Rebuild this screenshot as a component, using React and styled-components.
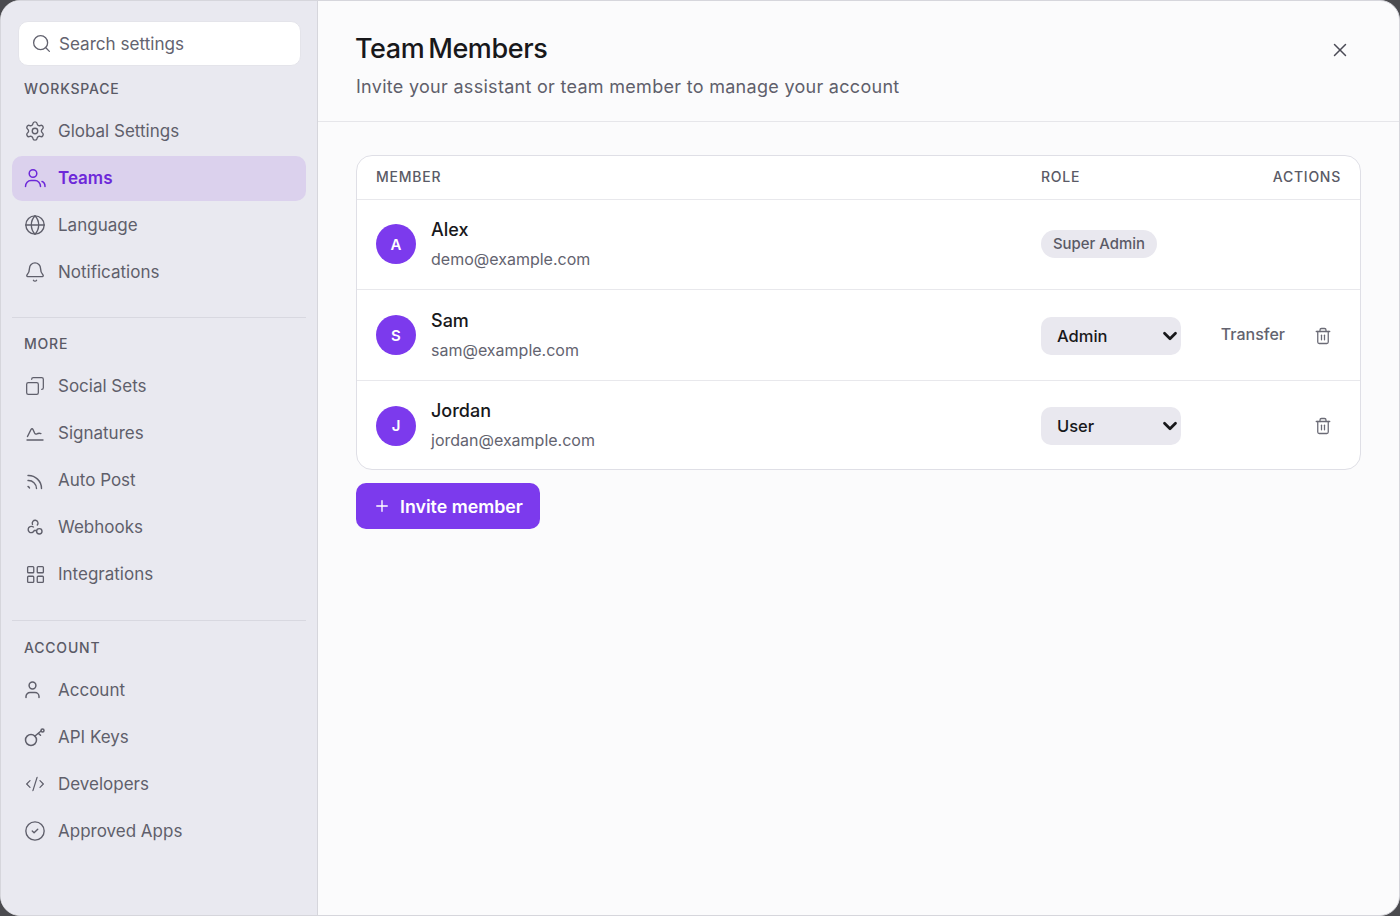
import styled, { createGlobalStyle } from 'styled-components';
import {
  Search, Settings, Globe, Bell, Copy, LayoutGrid, CodeXml, CircleCheck, Trash2, X, Plus, ChevronDown,
} from 'lucide-react';

const GlobalStyle = createGlobalStyle`
  * { box-sizing: border-box; }
  html, body { margin: 0; height: 100%; background: #4b4b4f; }
  body { font-family: Inter, "Liberation Sans", sans-serif; }
`;

const Window = styled.div`
  display: flex;
  height: 916px;
  overflow: hidden;
  border: 1px solid #d6d6dc;
  border-radius: 20px;
  background: #fbfbfc;
`;

const Sidebar = styled.aside`
  width: 317px;
  flex-shrink: 0;
  padding: 20px 11px 0;
  background: #e9e9f0;
  border-right: 1px solid #d6d6dc;
  display: flex;
  flex-direction: column;
`;

const SearchBox = styled.div`
  display: flex;
  align-items: center;
  gap: 7px;
  height: 45px;
  margin: 0 5px 0 6px;
  padding: 0 12px;
  background: #fff;
  border: 1px solid #e4e4ea;
  border-radius: 10px;
  color: #63636f;
  font-size: 17.1px;
`;

const SectionLabel = styled.div`
  height: 20px;
  line-height: 20px;
  margin: ${(p) => p.$top}px 0 10px 12px;
  color: #5a5a66;
  font-size: 14px;
  font-weight: 500;
  letter-spacing: 0.8px;
`;

const NavItem = styled.div`
  display: flex;
  align-items: center;
  gap: 12px;
  height: 45px;
  margin-bottom: 2px;
  padding: 0 0 1px 12px;
  border-radius: 10px;
  background: ${(p) => (p.$active ? '#dbd1ed' : 'transparent')};
  color: ${(p) => (p.$active ? '#6d28d9' : '#5f5f6b')};
  font-size: 17px;
  font-weight: ${(p) => (p.$active ? 600 : 400)};
`;

const IconSlot = styled.span`
  display: flex;
  justify-content: center;
  flex: 0 0 22px;
`;

const Divider = styled.hr`
  width: 100%;
  margin: ${(p) => p.$top}px 0 0;
  border: 0;
  border-top: 1px solid #d8d8e0;
`;

const Main = styled.main`
  flex: 1;
  min-width: 0;
  display: flex;
  flex-direction: column;
`;

const Header = styled.header`
  display: flex;
  justify-content: space-between;
  height: 121px;
  padding: 28px 48px 0 38px;
  border-bottom: 1px solid #e6e6ea;
`;

const Title = styled.h1`
  margin: 0 0 0 -1px;
  color: #18181b;
  font-size: 27px;
  line-height: 40px;
  font-weight: 500;
  letter-spacing: -0.4px;
  word-spacing: -3px;
`;

const Subtitle = styled.p`
  margin: 4px 0 0;
  color: #5f5f6b;
  font-size: 18px;
  line-height: 28px;
  letter-spacing: 0.29px;
`;

const CloseButton = styled.button`
  display: flex;
  align-self: flex-start;
  margin-top: 10px;
  padding: 0;
  background: none;
  border: 0;
  color: #4a4a55;
`;

const Content = styled.div`
  padding: 33px 38px 0 38px;
`;

const Table = styled.div`
  background: #fff;
  border: 1px solid #dfdfe6;
  border-radius: 16px;
`;

const Row = styled.div`
  display: grid;
  grid-template-columns: 1fr 160px 140px;
  align-items: center;
  height: ${(p) => p.$height}px;
  padding: ${(p) => p.$padTop || 0}px 19px ${(p) => p.$padBottom || 0}px;
  border-bottom: ${(p) => (p.$last ? '0' : '1px solid #e8e8ec')};
`;

const HeadCell = styled.div`
  color: #5a5a66;
  font-size: 14px;
  font-weight: 500;
  letter-spacing: 0.75px;
  text-align: ${(p) => (p.$right ? 'right' : 'left')};
`;

const Member = styled.div`
  display: flex;
  align-items: center;
  gap: 15px;
`;

const Avatar = styled.div`
  display: flex;
  align-items: center;
  justify-content: center;
  width: 40px;
  height: 40px;
  border-radius: 50%;
  background: #7c3aed;
  color: #fff;
  font-size: 15px;
  font-weight: 600;
`;

const Name = styled.div`
  color: #18181b;
  font-size: 18px;
  line-height: 24px;
  font-weight: 500;
`;

const Email = styled.div`
  margin-top: 5px;
  color: #63636f;
  font-size: 16px;
  line-height: 24px;
`;

const Badge = styled.span`
  display: inline-block;
  padding: 0 12px;
  height: 28px;
  line-height: 28px;
  border-radius: 14px;
  background: #e9e8ef;
  color: #5a5a66;
  font-size: 14.9px;
  font-weight: 500;
`;

const SelectWrap = styled.div`
  position: relative;
  width: 140px;
  margin-top: 1px;
  color: #18181b;

  svg {
    position: absolute;
    top: 8px;
    right: 0;
    pointer-events: none;
  }
`;

const RoleSelect = styled.select`
  display: block;
  width: 100%;
  height: 38px;
  padding: 0 16px;
  appearance: none;
  border: 0;
  border-radius: 10px;
  background: #e9e8ef;
  color: #18181b;
  font-family: inherit;
  font-size: 16.5px;
  font-weight: 500;
`;

const Actions = styled.div`
  display: flex;
  align-items: center;
  justify-content: flex-end;
  gap: 20px;
`;

const Transfer = styled.button`
  padding: 0 0 2px;
  background: none;
  border: 0;
  color: #63636f;
  font-family: inherit;
  font-size: 16px;
  font-weight: 500;
`;

const TrashButton = styled.button`
  display: flex;
  padding: 10px 9px 9px;
  background: none;
  border: 0;
  color: #6b6b76;
`;

const InviteButton = styled.button`
  display: flex;
  align-items: center;
  gap: 9px;
  height: 46px;
  margin-top: 13px;
  padding: 0 17px;
  border: 0;
  border-radius: 10px;
  background: #7c3aed;
  color: #fff;
  font-family: inherit;
  font-size: 17.8px;
  font-weight: 600;
`;

const FlippedCopy = styled(Copy)`
  transform: scaleX(-1);
`;

const TeamsIcon = () => (
  <svg width="22" height="22" viewBox="0 0 22 22" fill="none" stroke="currentColor" strokeWidth="1.5" strokeLinecap="round">
    <circle cx="9" cy="6.5" r="3.8" />
    <path d="M1.500 19.500c0-3.500 2.500-6 5.500-6h4c3 0 5.500 2.500 5.500 6" />
    <path d="M18 14.500c1.800.5 3 2.500 3 5" />
  </svg>
);

const SignatureIcon = () => (
  <svg width="20" height="20" viewBox="0 0 20 20" fill="none" stroke="currentColor" strokeWidth="1.4" strokeLinecap="round" strokeLinejoin="round">
    <path d="M2.500 13.500 6 6.500c.6-1 1.500-1 2 0l1.600 3.500c.5 1 1.300 1.400 2.300.9l1-.4c1-.4 2-.3 3 .1" />
    <path d="M2 17h16" />
  </svg>
);

const AutoPostIcon = () => (
  <svg width="20" height="20" viewBox="0 0 20 20" fill="none" stroke="currentColor" strokeWidth="1.4" strokeLinecap="round">
    <path d="M3 5.500a13 13 0 0 1 13.500 13" />
    <path d="M3 10.500a8 8 0 0 1 8.500 8" />
    <path d="M3 16.500a2.500 2.500 0 0 1 1.500 1.500" />
  </svg>
);

const WebhookIcon = () => (
  <svg width="20" height="20" viewBox="0 0 20 20" fill="none" stroke="currentColor" strokeWidth="1.4" strokeLinecap="round" strokeLinejoin="round">
    <path d="M7.500 7.500c-1-2.500 1-4.500 3-4.200 2.300.3 3.300 3 1.800 4.700" />
    <path d="M8.500 10c-2.300-1.300-5-.3-5.300 2-.3 2.400 1.800 4.200 4 3.500 1-.3 1.700-1 2-2h1.800" />
    <circle cx="14.300" cy="14.300" r="2.700" />
  </svg>
);

const UserIcon = () => (
  <svg width="20" height="20" viewBox="0 0 20 20" fill="none" stroke="currentColor" strokeWidth="1.5" strokeLinecap="round">
    <circle cx="7.500" cy="5.500" r="3.400" />
    <path d="M1 17.500v-1a4 4 0 0 1 4-4h5a4 4 0 0 1 4 4v1" />
  </svg>
);

const KeyIcon = () => (
  <svg width="22" height="22" viewBox="0 0 22 22" fill="none" stroke="currentColor" strokeWidth="1.5" strokeLinecap="round">
    <circle cx="7" cy="14" r="5.500" />
    <path d="m11 10 6-5" />
    <circle cx="18.500" cy="4.500" r="1.500" />
    <path d="m14.500 7.500 2 1.800" />
  </svg>
);

const stroke = { strokeWidth: 1.5 };

const groups = {
  workspace: [
    { label: 'Global Settings', icon: <Settings size={22} {...stroke} /> },
    { label: 'Teams', icon: <TeamsIcon />, active: true },
    { label: 'Language', icon: <Globe size={22} {...stroke} /> },
    { label: 'Notifications', icon: <Bell size={22} {...stroke} /> },
  ],
  more: [
    { label: 'Social Sets', icon: <FlippedCopy size={20} {...stroke} /> },
    { label: 'Signatures', icon: <SignatureIcon /> },
    { label: 'Auto Post', icon: <AutoPostIcon /> },
    { label: 'Webhooks', icon: <WebhookIcon /> },
    { label: 'Integrations', icon: <LayoutGrid size={21} {...stroke} /> },
  ],
  account: [
    { label: 'Account', icon: <UserIcon /> },
    { label: 'API Keys', icon: <KeyIcon /> },
    { label: 'Developers', icon: <CodeXml size={20} {...stroke} /> },
    { label: 'Approved Apps', icon: <CircleCheck size={22} {...stroke} /> },
  ],
};

const members = [
  { name: 'Alex', email: 'demo@example.com', badge: 'Super Admin', height: 90, padBottom: 1 },
  { name: 'Sam', email: 'sam@example.com', role: 'Admin', transfer: true, height: 91 },
  { name: 'Jordan', email: 'jordan@example.com', role: 'User', height: 88, padTop: 1, last: true },
];

function NavGroup({ items }) {
  return items.map((item) => (
    <NavItem key={item.label} $active={item.active}>
      <IconSlot>{item.icon}</IconSlot>
      {item.label}
    </NavItem>
  ));
}

export default function App() {
  return (
    <>
      <GlobalStyle />
      <Window>
        <Sidebar>
          <SearchBox>
            <Search size={21} strokeWidth={1.5} />
            Search settings
          </SearchBox>
          <SectionLabel $top={13}>WORKSPACE</SectionLabel>
          <NavGroup items={groups.workspace} />
          <Divider $top={20} />
          <SectionLabel $top={16}>MORE</SectionLabel>
          <NavGroup items={groups.more} />
          <Divider $top={21} />
          <SectionLabel $top={17}>ACCOUNT</SectionLabel>
          <NavGroup items={groups.account} />
        </Sidebar>
        <Main>
          <Header>
            <div>
              <Title>Team Members</Title>
              <Subtitle>Invite your assistant or team member to manage your account</Subtitle>
            </div>
            <CloseButton aria-label="Close">
              <X size={22} strokeWidth={1.6} />
            </CloseButton>
          </Header>
          <Content>
            <Table>
              <Row $height={44} $padBottom={2}>
                <HeadCell>MEMBER</HeadCell>
                <HeadCell>ROLE</HeadCell>
                <HeadCell $right>ACTIONS</HeadCell>
              </Row>
              {members.map((m) => (
                <Row key={m.name} $height={m.height} $padTop={m.padTop} $padBottom={m.padBottom} $last={m.last}>
                  <Member>
                    <Avatar>{m.name[0]}</Avatar>
                    <div>
                      <Name>{m.name}</Name>
                      <Email>{m.email}</Email>
                    </div>
                  </Member>
                  <div>
                    {m.badge ? (
                      <Badge>{m.badge}</Badge>
                    ) : (
                      <SelectWrap>
                        <RoleSelect defaultValue={m.role}>
                          <option>Admin</option>
                          <option>User</option>
                        </RoleSelect>
                        <ChevronDown size={22} strokeWidth={3} />
                      </SelectWrap>
                    )}
                  </div>
                  {!m.badge && (
                    <Actions>
                      {m.transfer && <Transfer>Transfer</Transfer>}
                      <TrashButton aria-label="Remove">
                        <Trash2 size={18} strokeWidth={1.7} />
                      </TrashButton>
                    </Actions>
                  )}
                </Row>
              ))}
            </Table>
            <InviteButton>
              <Plus size={18} strokeWidth={1.8} />
              Invite member
            </InviteButton>
          </Content>
        </Main>
      </Window>
    </>
  );
}
